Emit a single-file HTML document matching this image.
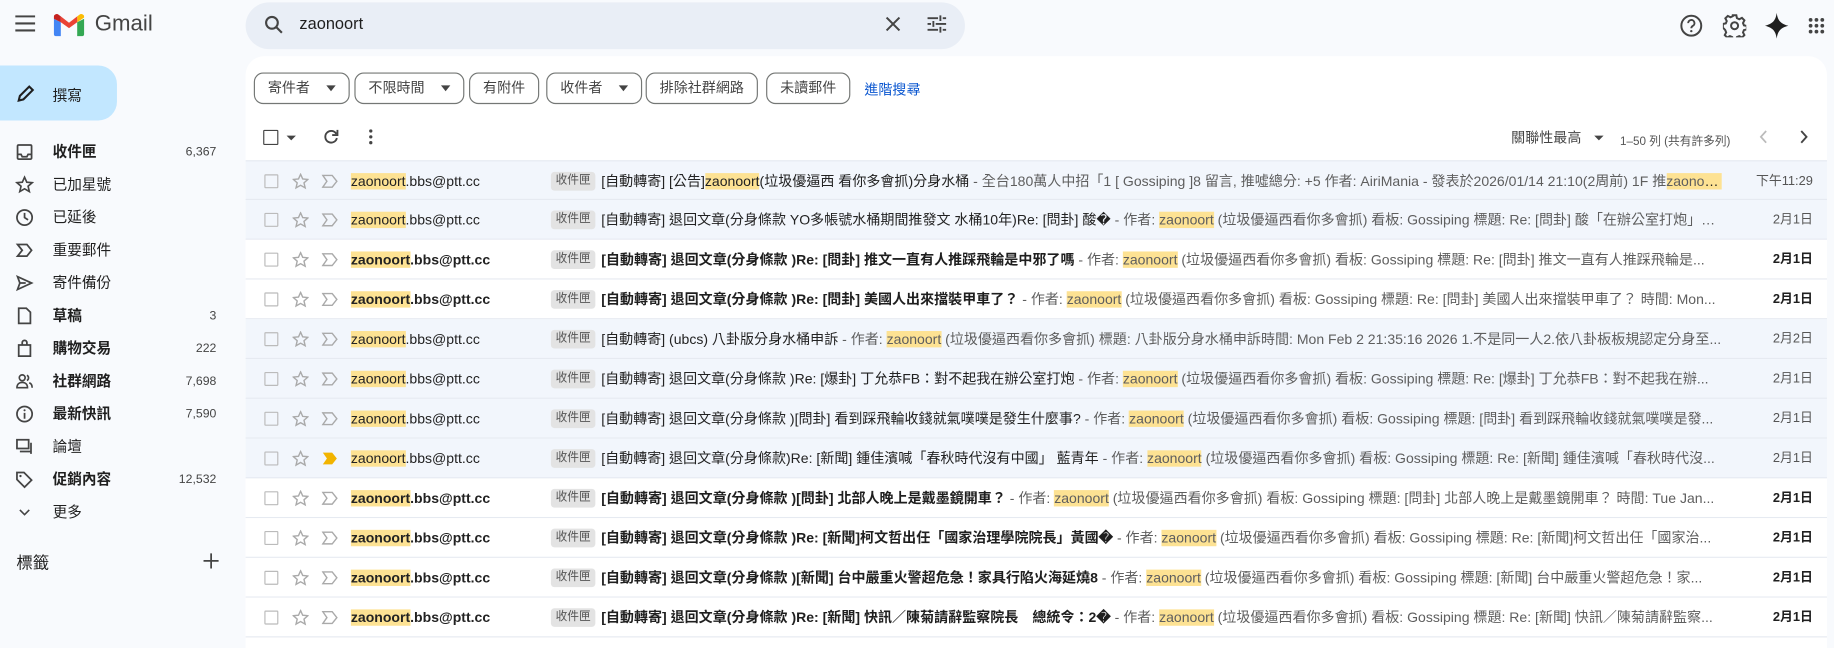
<!DOCTYPE html>
<html><head><meta charset="utf-8"><style>
*{box-sizing:border-box;margin:0;padding:0}
body{width:1834px;height:648px;overflow:hidden;background:#f8fafd;font-family:"Liberation Sans","Noto Sans CJK TC",sans-serif;color:#1f1f1f}
#w{width:1568px;height:554px;transform:scale(1.16964);transform-origin:0 0;position:relative}
.a{position:absolute}
svg{display:block}
.nav{position:absolute;left:0;width:200px;height:28px;font-size:12.5px;line-height:28px}
.nav .ic{position:absolute;left:13px;top:6px}
.nav .t{position:absolute;left:45px;top:0}
.nav .c{position:absolute;right:15px;top:0;font-size:10.5px;color:#444}
.nav.b .t{font-weight:bold}
.chip{position:absolute;top:62px;height:27px;border:1px solid #747775;border-radius:8px;font-size:12px;line-height:25px;color:#444;padding:0 11px;white-space:nowrap}
.chip i{display:inline-block;vertical-align:middle;width:0;height:0;border-left:4.5px solid transparent;border-right:4.5px solid transparent;border-top:5px solid #444;margin-left:14px}
.row{position:absolute;left:210px;width:1352px;height:34px;border-bottom:1px solid #e6eaf1;background:#f2f6fc;font-size:12px;line-height:34px;color:#222}
.row.u{background:#fff}
.row .cb{position:absolute;left:16px;top:11px;width:12px;height:12px;border:1.5px solid #bbb;border-radius:1px}
.row .st{position:absolute;left:40px;top:10px}
.row .im{position:absolute;left:65px;top:11px}
.row .s{position:absolute;left:90px;top:0;white-space:nowrap}
.row.u .s{font-weight:bold}
.h{background:#fde293}
.row .lb{position:absolute;left:261px;top:9px;height:16px;background:#e3e3e3;border-radius:3px;font-size:10px;color:#555;padding:0 4px;line-height:16px}
.row .sub{position:absolute;left:304px;top:0;width:958px;white-space:nowrap;overflow:hidden;text-overflow:ellipsis}
.row .sub b{font-weight:normal}
.row.u .sub b{font-weight:bold;color:#1f1f1f}
.row .sub span.g{color:#5e5e5e}
.row .d{position:absolute;right:12px;top:0;font-size:11px;color:#555}
.row.u .d{font-weight:bold;color:#1f1f1f}
</style></head><body><div id="w">
<svg class="a" style="left:13px;top:13px" width="18" height="14"><path d="M0 1h17M0 7h17M0 13h17" stroke="#444" stroke-width="1.8"/></svg>
<svg class="a" style="left:46px;top:12px" width="26" height="19" viewBox="0 0 26 19"><path d="M0 4v13a2 2 0 0 0 2 2h4V7z" fill="#4285f4"/><path d="M26 4v13a2 2 0 0 1-2 2h-4V7z" fill="#34a853"/><path d="M20 2v5l6-4V2.5A2.5 2.5 0 0 0 22 0.5z" fill="#fbbc04"/><path d="M6 7V2L13 7.5 20 2v5l-7 5z" fill="#ea4335"/><path d="M0 2.5V4l6 3V2L4 0.5A2.5 2.5 0 0 0 0 2.5z" fill="#c5221f"/></svg>
<div class="a" style="left:81px;top:10px;font-size:19px;color:#444">Gmail</div>
<div class="a" style="left:210px;top:2px;width:615px;height:40px;background:#e9eef6;border-radius:20px"></div>
<svg class="a" style="left:226px;top:13px" width="16" height="16"><circle cx="6.5" cy="6.5" r="5" fill="none" stroke="#444" stroke-width="1.8"/><path d="M10 10l5 5" stroke="#444" stroke-width="1.8"/></svg>
<div class="a" style="left:256px;top:12px;font-size:14px;color:#1f1f1f">zaonoort</div>
<svg class="a" style="left:757px;top:14px" width="13" height="13"><path d="M1 1l11 11M12 1L1 12" stroke="#444" stroke-width="1.7"/></svg>
<svg class="a" style="left:793px;top:13px" width="16" height="15"><path d="M0 2.5h9M13 2.5h3M0 7.5h3M7 7.5h9M0 12.5h9M13 12.5h3M11 0v5M5 5v5M11 10v5" stroke="#444" stroke-width="1.6" fill="none"/></svg>
<svg class="a" style="left:1436px;top:12px" width="20" height="20"><circle cx="10" cy="10" r="8.5" fill="none" stroke="#444" stroke-width="1.7"/><path d="M7.3 7.8a2.7 2.7 0 1 1 3.9 2.4c-.8.5-1.2 1-1.2 2" fill="none" stroke="#444" stroke-width="1.6"/><circle cx="10" cy="14.6" r="1" fill="#444"/></svg>
<svg class="a" style="left:1473px;top:12px" width="20" height="20" viewBox="0 0 20 20"><path d="M8.5 1h3l.5 2.5 2 1 2.3-1.2 2.1 2.1-1.2 2.3.8 2 2.5.5v3l-2.5.5-.8 2 1.2 2.3-2.1 2.1-2.3-1.2-2 .8-.5 2.5h-3l-.5-2.5-2-.8-2.3 1.2-2.1-2.1 1.2-2.3-.8-2L0 11.5v-3l2.5-.5.8-2L2.1 3.7 4.2 1.6l2.3 1.2 2-1z" fill="none" stroke="#444" stroke-width="1.7"/><circle cx="10" cy="10" r="3" fill="none" stroke="#444" stroke-width="1.7"/></svg>
<svg class="a" style="left:1509px;top:11px" width="20" height="22"><path d="M10 0C10.8 6 13 9.3 20 11 13 12.7 10.8 16 10 22 9.2 16 7 12.7 0 11 7 9.3 9.2 6 10 0z" fill="#1f1f1f"/></svg>
<svg class="a" style="left:1546px;top:15px" width="14" height="14"><g fill="#444"><circle cx="2" cy="2" r="1.6"/><circle cx="7" cy="2" r="1.6"/><circle cx="12" cy="2" r="1.6"/><circle cx="2" cy="7" r="1.6"/><circle cx="7" cy="7" r="1.6"/><circle cx="12" cy="7" r="1.6"/><circle cx="2" cy="12" r="1.6"/><circle cx="7" cy="12" r="1.6"/><circle cx="12" cy="12" r="1.6"/></g></svg>
<div class="a" style="left:0;top:56px;width:100px;height:47px;background:#c2e7ff;border-radius:0 16px 16px 0"></div>
<svg class="a" style="left:14px;top:72px" width="16" height="16"><path d="M2 14l1-4L11 2l3 3-8 8z" fill="none" stroke="#1f1f1f" stroke-width="1.8"/></svg>
<div class="a" style="left:45px;top:71px;font-size:12.5px">撰寫</div>
<div class="nav b" style="top:116px"><svg class="ic" width="16" height="16"><rect x="2" y="2" width="12" height="12" rx="1" fill="none" stroke="#444" stroke-width="1.5"/><path d="M2 10h3l1 2h4l1-2h3" fill="none" stroke="#444" stroke-width="1.5"/></svg><span class="t">收件匣</span><span class="c">6,367</span></div>
<div class="nav" style="top:144px"><svg class="ic" width="16" height="16"><path d="M8 1.5l1.9 4.3 4.6.4-3.5 3 1.1 4.6L8 11.4l-4.1 2.4 1.1-4.6-3.5-3 4.6-.4z" fill="none" stroke="#444" stroke-width="1.4"/></svg><span class="t">已加星號</span></div>
<div class="nav" style="top:172px"><svg class="ic" width="16" height="16"><circle cx="8" cy="8" r="6.5" fill="none" stroke="#444" stroke-width="1.5"/><path d="M8 4v4l3 2" fill="none" stroke="#444" stroke-width="1.5"/></svg><span class="t">已延後</span></div>
<div class="nav" style="top:200px"><svg class="ic" width="16" height="16"><path d="M2 3h8l4 5-4 5H2l4-5z" fill="none" stroke="#444" stroke-width="1.5"/></svg><span class="t">重要郵件</span></div>
<div class="nav" style="top:228px"><svg class="ic" width="16" height="16"><path d="M2 2.5l12 5.5-12 5.5 2-5.5z M4 8h5" fill="none" stroke="#444" stroke-width="1.5"/></svg><span class="t">寄件備份</span></div>
<div class="nav b" style="top:256px"><svg class="ic" width="16" height="16"><path d="M3 1.5h6.5l3.5 3.5v9.5H3z" fill="none" stroke="#444" stroke-width="1.5"/></svg><span class="t">草稿</span><span class="c">3</span></div>
<div class="nav b" style="top:284px"><svg class="ic" width="16" height="16"><path d="M3 5h10v9.5H3zM6 5V3a2 2 0 0 1 4 0v2" fill="none" stroke="#444" stroke-width="1.5"/></svg><span class="t">購物交易</span><span class="c">222</span></div>
<div class="nav b" style="top:312px"><svg class="ic" width="16" height="16"><circle cx="6" cy="5" r="2.5" fill="none" stroke="#444" stroke-width="1.4"/><path d="M1.5 13.5c0-3 2-4.5 4.5-4.5s4.5 1.5 4.5 4.5zM10 2.8a2.5 2.5 0 0 1 0 4.5M12 9.3c1.5.5 2.5 2 2.5 4.2" fill="none" stroke="#444" stroke-width="1.4"/></svg><span class="t">社群網路</span><span class="c">7,698</span></div>
<div class="nav b" style="top:340px"><svg class="ic" width="16" height="16"><circle cx="8" cy="8" r="6.5" fill="none" stroke="#444" stroke-width="1.5"/><path d="M8 7v5" stroke="#444" stroke-width="1.5"/><circle cx="8" cy="4.8" r="0.9" fill="#444"/></svg><span class="t">最新快訊</span><span class="c">7,590</span></div>
<div class="nav" style="top:368px"><svg class="ic" width="16" height="16"><path d="M1.5 2h10v7.5h-10zM4 12h9.5V4.5M13.5 12v2" fill="none" stroke="#444" stroke-width="1.5"/></svg><span class="t">論壇</span></div>
<div class="nav b" style="top:396px"><svg class="ic" width="16" height="16"><path d="M1.5 2v6l6.5 6.5 6-6L7.5 2z" fill="none" stroke="#444" stroke-width="1.5"/><circle cx="4.5" cy="5" r="1" fill="#444"/></svg><span class="t">促銷內容</span><span class="c">12,532</span></div>
<div class="nav" style="top:424px"><svg class="ic" width="16" height="16"><path d="M4 6l4 4 4-4" fill="none" stroke="#444" stroke-width="1.4"/></svg><span class="t">更多</span></div>
<div class="a" style="left:14px;top:471px;font-size:14px;color:#1f1f1f">標籤</div>
<svg class="a" style="left:174px;top:473px" width="13" height="13"><path d="M6.5 0v13M0 6.5h13" stroke="#444" stroke-width="1.5"/></svg>
<div class="a" style="left:210px;top:48px;width:1352px;height:506px;background:#fff;border-radius:16px 16px 0 0"></div>
<div class="chip" style="left:217px">寄件者<i></i></div>
<div class="chip" style="left:303px">不限時間<i></i></div>
<div class="chip" style="left:401px">有附件</div>
<div class="chip" style="left:467px">收件者<i></i></div>
<div class="chip" style="left:552px">排除社群網路</div>
<div class="chip" style="left:655px">未讀郵件</div>
<div class="a" style="left:739px;top:68px;font-size:12px;color:#0b57d0">進階搜尋</div>
<div class="a" style="left:225px;top:111px;width:13px;height:13px;border:1.6px solid #444;border-radius:1px"></div>
<div class="a" style="left:245px;top:116px;border-left:4px solid transparent;border-right:4px solid transparent;border-top:4px solid #444"></div>
<svg class="a" style="left:276px;top:110px" width="14" height="14"><path d="M11.5 4.5A5 5 0 1 0 12 8" fill="none" stroke="#444" stroke-width="1.6"/><path d="M12.5 1v4.5H8" fill="none" stroke="#444" stroke-width="1.6"/></svg>
<svg class="a" style="left:315px;top:110px" width="4" height="14"><circle cx="2" cy="2" r="1.4" fill="#444"/><circle cx="2" cy="7" r="1.4" fill="#444"/><circle cx="2" cy="12" r="1.4" fill="#444"/></svg>
<div class="a" style="left:1292px;top:109px;font-size:12px;color:#444">關聯性最高</div>
<div class="a" style="left:1363px;top:116px;border-left:4px solid transparent;border-right:4px solid transparent;border-top:4.5px solid #444"></div>
<div class="a" style="left:1385px;top:112px;font-size:10px;color:#555">1–50 列 (共有許多列)</div>
<svg class="a" style="left:1504px;top:111px" width="8" height="12"><path d="M6 1L1.5 6 6 11" fill="none" stroke="#bbb" stroke-width="1.5"/></svg>
<svg class="a" style="left:1538px;top:111px" width="8" height="12"><path d="M2 1l4.5 5L2 11" fill="none" stroke="#444" stroke-width="1.6"/></svg>

<div class="row" style="top:137px;border-top:1px solid #e6eaf1"><div class="cb"></div><svg class="st" width="14" height="14"><path d="M7 1l1.8 4 4.4.4-3.3 2.9 1 4.3L7 10.4l-3.9 2.2 1-4.3L.8 5.4 5.2 5z" fill="none" stroke="#aaa" stroke-width="1.2"/></svg><svg class="im" width="14" height="12"><path d="M1 1h8l4 5-4 5H1l3.5-5z" fill="none" stroke="#aaa" stroke-width="1.2"/></svg><div class="s"><span class="h">zaonoort</span>.bbs@ptt.cc</div><div class="lb">收件匣</div><div class="sub"><b>[自動轉寄] [公告]<span class="h">zaonoort</span>(垃圾優逼西 看你多會抓)分身水桶</b><span class="g"> - 全台180萬人中招「1 [ Gossiping ]8 留言, 推噓總分: +5 作者: AiriMania - 發表於2026/01/14 21:10(2周前) 1F 推<span class="h">zaono...&nbsp;&nbsp;&nbsp;</span></span></div><div class="d">下午11:29</div></div>
<div class="row" style="top:171px"><div class="cb"></div><svg class="st" width="14" height="14"><path d="M7 1l1.8 4 4.4.4-3.3 2.9 1 4.3L7 10.4l-3.9 2.2 1-4.3L.8 5.4 5.2 5z" fill="none" stroke="#aaa" stroke-width="1.2"/></svg><svg class="im" width="14" height="12"><path d="M1 1h8l4 5-4 5H1l3.5-5z" fill="none" stroke="#aaa" stroke-width="1.2"/></svg><div class="s"><span class="h">zaonoort</span>.bbs@ptt.cc</div><div class="lb">收件匣</div><div class="sub"><b>[自動轉寄] 退回文章(分身條款 YO多帳號水桶期間推發文 水桶10年)Re: [問卦] 酸�</b><span class="g"> - 作者: <span class="h">zaonoort</span> (垃圾優逼西看你多會抓) 看板: Gossiping 標題: Re: [問卦] 酸「在辦公室打炮」…</span></div><div class="d">2月1日</div></div>
<div class="row u" style="top:205px"><div class="cb"></div><svg class="st" width="14" height="14"><path d="M7 1l1.8 4 4.4.4-3.3 2.9 1 4.3L7 10.4l-3.9 2.2 1-4.3L.8 5.4 5.2 5z" fill="none" stroke="#aaa" stroke-width="1.2"/></svg><svg class="im" width="14" height="12"><path d="M1 1h8l4 5-4 5H1l3.5-5z" fill="none" stroke="#aaa" stroke-width="1.2"/></svg><div class="s"><span class="h">zaonoort</span>.bbs@ptt.cc</div><div class="lb">收件匣</div><div class="sub"><b>[自動轉寄] 退回文章(分身條款 )Re: [問卦] 推文一直有人推踩飛輪是中邪了嗎</b><span class="g"> - 作者: <span class="h">zaonoort</span> (垃圾優逼西看你多會抓) 看板: Gossiping 標題: Re: [問卦] 推文一直有人推踩飛輪是...</span></div><div class="d">2月1日</div></div>
<div class="row u" style="top:239px"><div class="cb"></div><svg class="st" width="14" height="14"><path d="M7 1l1.8 4 4.4.4-3.3 2.9 1 4.3L7 10.4l-3.9 2.2 1-4.3L.8 5.4 5.2 5z" fill="none" stroke="#aaa" stroke-width="1.2"/></svg><svg class="im" width="14" height="12"><path d="M1 1h8l4 5-4 5H1l3.5-5z" fill="none" stroke="#aaa" stroke-width="1.2"/></svg><div class="s"><span class="h">zaonoort</span>.bbs@ptt.cc</div><div class="lb">收件匣</div><div class="sub"><b>[自動轉寄] 退回文章(分身條款 )Re: [問卦] 美國人出來擋裝甲車了？</b><span class="g"> - 作者: <span class="h">zaonoort</span> (垃圾優逼西看你多會抓) 看板: Gossiping 標題: Re: [問卦] 美國人出來擋裝甲車了？ 時間: Mon...</span></div><div class="d">2月1日</div></div>
<div class="row" style="top:273px"><div class="cb"></div><svg class="st" width="14" height="14"><path d="M7 1l1.8 4 4.4.4-3.3 2.9 1 4.3L7 10.4l-3.9 2.2 1-4.3L.8 5.4 5.2 5z" fill="none" stroke="#aaa" stroke-width="1.2"/></svg><svg class="im" width="14" height="12"><path d="M1 1h8l4 5-4 5H1l3.5-5z" fill="none" stroke="#aaa" stroke-width="1.2"/></svg><div class="s"><span class="h">zaonoort</span>.bbs@ptt.cc</div><div class="lb">收件匣</div><div class="sub"><b>[自動轉寄] (ubcs) 八卦版分身水桶申訴</b><span class="g"> - 作者: <span class="h">zaonoort</span> (垃圾優逼西看你多會抓) 標題: 八卦版分身水桶申訴時間: Mon Feb 2 21:35:16 2026 1.不是同一人2.依八卦板板規認定分身至...</span></div><div class="d">2月2日</div></div>
<div class="row" style="top:307px"><div class="cb"></div><svg class="st" width="14" height="14"><path d="M7 1l1.8 4 4.4.4-3.3 2.9 1 4.3L7 10.4l-3.9 2.2 1-4.3L.8 5.4 5.2 5z" fill="none" stroke="#aaa" stroke-width="1.2"/></svg><svg class="im" width="14" height="12"><path d="M1 1h8l4 5-4 5H1l3.5-5z" fill="none" stroke="#aaa" stroke-width="1.2"/></svg><div class="s"><span class="h">zaonoort</span>.bbs@ptt.cc</div><div class="lb">收件匣</div><div class="sub"><b>[自動轉寄] 退回文章(分身條款 )Re: [爆卦] 丁允恭FB：對不起我在辦公室打炮</b><span class="g"> - 作者: <span class="h">zaonoort</span> (垃圾優逼西看你多會抓) 看板: Gossiping 標題: Re: [爆卦] 丁允恭FB：對不起我在辦...</span></div><div class="d">2月1日</div></div>
<div class="row" style="top:341px"><div class="cb"></div><svg class="st" width="14" height="14"><path d="M7 1l1.8 4 4.4.4-3.3 2.9 1 4.3L7 10.4l-3.9 2.2 1-4.3L.8 5.4 5.2 5z" fill="none" stroke="#aaa" stroke-width="1.2"/></svg><svg class="im" width="14" height="12"><path d="M1 1h8l4 5-4 5H1l3.5-5z" fill="none" stroke="#aaa" stroke-width="1.2"/></svg><div class="s"><span class="h">zaonoort</span>.bbs@ptt.cc</div><div class="lb">收件匣</div><div class="sub"><b>[自動轉寄] 退回文章(分身條款 )[問卦] 看到踩飛輪收錢就氣噗噗是發生什麼事?</b><span class="g"> - 作者: <span class="h">zaonoort</span> (垃圾優逼西看你多會抓) 看板: Gossiping 標題: [問卦] 看到踩飛輪收錢就氣噗噗是發...</span></div><div class="d">2月1日</div></div>
<div class="row" style="top:375px"><div class="cb"></div><svg class="st" width="14" height="14"><path d="M7 1l1.8 4 4.4.4-3.3 2.9 1 4.3L7 10.4l-3.9 2.2 1-4.3L.8 5.4 5.2 5z" fill="none" stroke="#aaa" stroke-width="1.2"/></svg><svg class="im" width="14" height="12"><path d="M1 1h8l4 5-4 5H1l3.5-5z" fill="#f2b400"/></svg><div class="s"><span class="h">zaonoort</span>.bbs@ptt.cc</div><div class="lb">收件匣</div><div class="sub"><b>[自動轉寄] 退回文章(分身條款)Re: [新聞] 鍾佳濱喊「春秋時代沒有中國」 藍青年</b><span class="g"> - 作者: <span class="h">zaonoort</span> (垃圾優逼西看你多會抓) 看板: Gossiping 標題: Re: [新聞] 鍾佳濱喊「春秋時代沒...</span></div><div class="d">2月1日</div></div>
<div class="row u" style="top:409px"><div class="cb"></div><svg class="st" width="14" height="14"><path d="M7 1l1.8 4 4.4.4-3.3 2.9 1 4.3L7 10.4l-3.9 2.2 1-4.3L.8 5.4 5.2 5z" fill="none" stroke="#aaa" stroke-width="1.2"/></svg><svg class="im" width="14" height="12"><path d="M1 1h8l4 5-4 5H1l3.5-5z" fill="none" stroke="#aaa" stroke-width="1.2"/></svg><div class="s"><span class="h">zaonoort</span>.bbs@ptt.cc</div><div class="lb">收件匣</div><div class="sub"><b>[自動轉寄] 退回文章(分身條款 )[問卦] 北部人晚上是戴墨鏡開車？</b><span class="g"> - 作者: <span class="h">zaonoort</span> (垃圾優逼西看你多會抓) 看板: Gossiping 標題: [問卦] 北部人晚上是戴墨鏡開車？ 時間: Tue Jan...</span></div><div class="d">2月1日</div></div>
<div class="row u" style="top:443px"><div class="cb"></div><svg class="st" width="14" height="14"><path d="M7 1l1.8 4 4.4.4-3.3 2.9 1 4.3L7 10.4l-3.9 2.2 1-4.3L.8 5.4 5.2 5z" fill="none" stroke="#aaa" stroke-width="1.2"/></svg><svg class="im" width="14" height="12"><path d="M1 1h8l4 5-4 5H1l3.5-5z" fill="none" stroke="#aaa" stroke-width="1.2"/></svg><div class="s"><span class="h">zaonoort</span>.bbs@ptt.cc</div><div class="lb">收件匣</div><div class="sub"><b>[自動轉寄] 退回文章(分身條款 )Re: [新聞]柯文哲出任「國家治理學院院長」黃國�</b><span class="g"> - 作者: <span class="h">zaonoort</span> (垃圾優逼西看你多會抓) 看板: Gossiping 標題: Re: [新聞]柯文哲出任「國家治...</span></div><div class="d">2月1日</div></div>
<div class="row u" style="top:477px"><div class="cb"></div><svg class="st" width="14" height="14"><path d="M7 1l1.8 4 4.4.4-3.3 2.9 1 4.3L7 10.4l-3.9 2.2 1-4.3L.8 5.4 5.2 5z" fill="none" stroke="#aaa" stroke-width="1.2"/></svg><svg class="im" width="14" height="12"><path d="M1 1h8l4 5-4 5H1l3.5-5z" fill="none" stroke="#aaa" stroke-width="1.2"/></svg><div class="s"><span class="h">zaonoort</span>.bbs@ptt.cc</div><div class="lb">收件匣</div><div class="sub"><b>[自動轉寄] 退回文章(分身條款 )[新聞] 台中嚴重火警超危急！家具行陷火海延燒8</b><span class="g"> - 作者: <span class="h">zaonoort</span> (垃圾優逼西看你多會抓) 看板: Gossiping 標題: [新聞] 台中嚴重火警超危急！家...</span></div><div class="d">2月1日</div></div>
<div class="row u" style="top:511px"><div class="cb"></div><svg class="st" width="14" height="14"><path d="M7 1l1.8 4 4.4.4-3.3 2.9 1 4.3L7 10.4l-3.9 2.2 1-4.3L.8 5.4 5.2 5z" fill="none" stroke="#aaa" stroke-width="1.2"/></svg><svg class="im" width="14" height="12"><path d="M1 1h8l4 5-4 5H1l3.5-5z" fill="none" stroke="#aaa" stroke-width="1.2"/></svg><div class="s"><span class="h">zaonoort</span>.bbs@ptt.cc</div><div class="lb">收件匣</div><div class="sub"><b>[自動轉寄] 退回文章(分身條款 )Re: [新聞] 快訊／陳菊請辭監察院長　總統令：2�</b><span class="g"> - 作者: <span class="h">zaonoort</span> (垃圾優逼西看你多會抓) 看板: Gossiping 標題: Re: [新聞] 快訊／陳菊請辭監察...</span></div><div class="d">2月1日</div></div>
</div></body></html>
